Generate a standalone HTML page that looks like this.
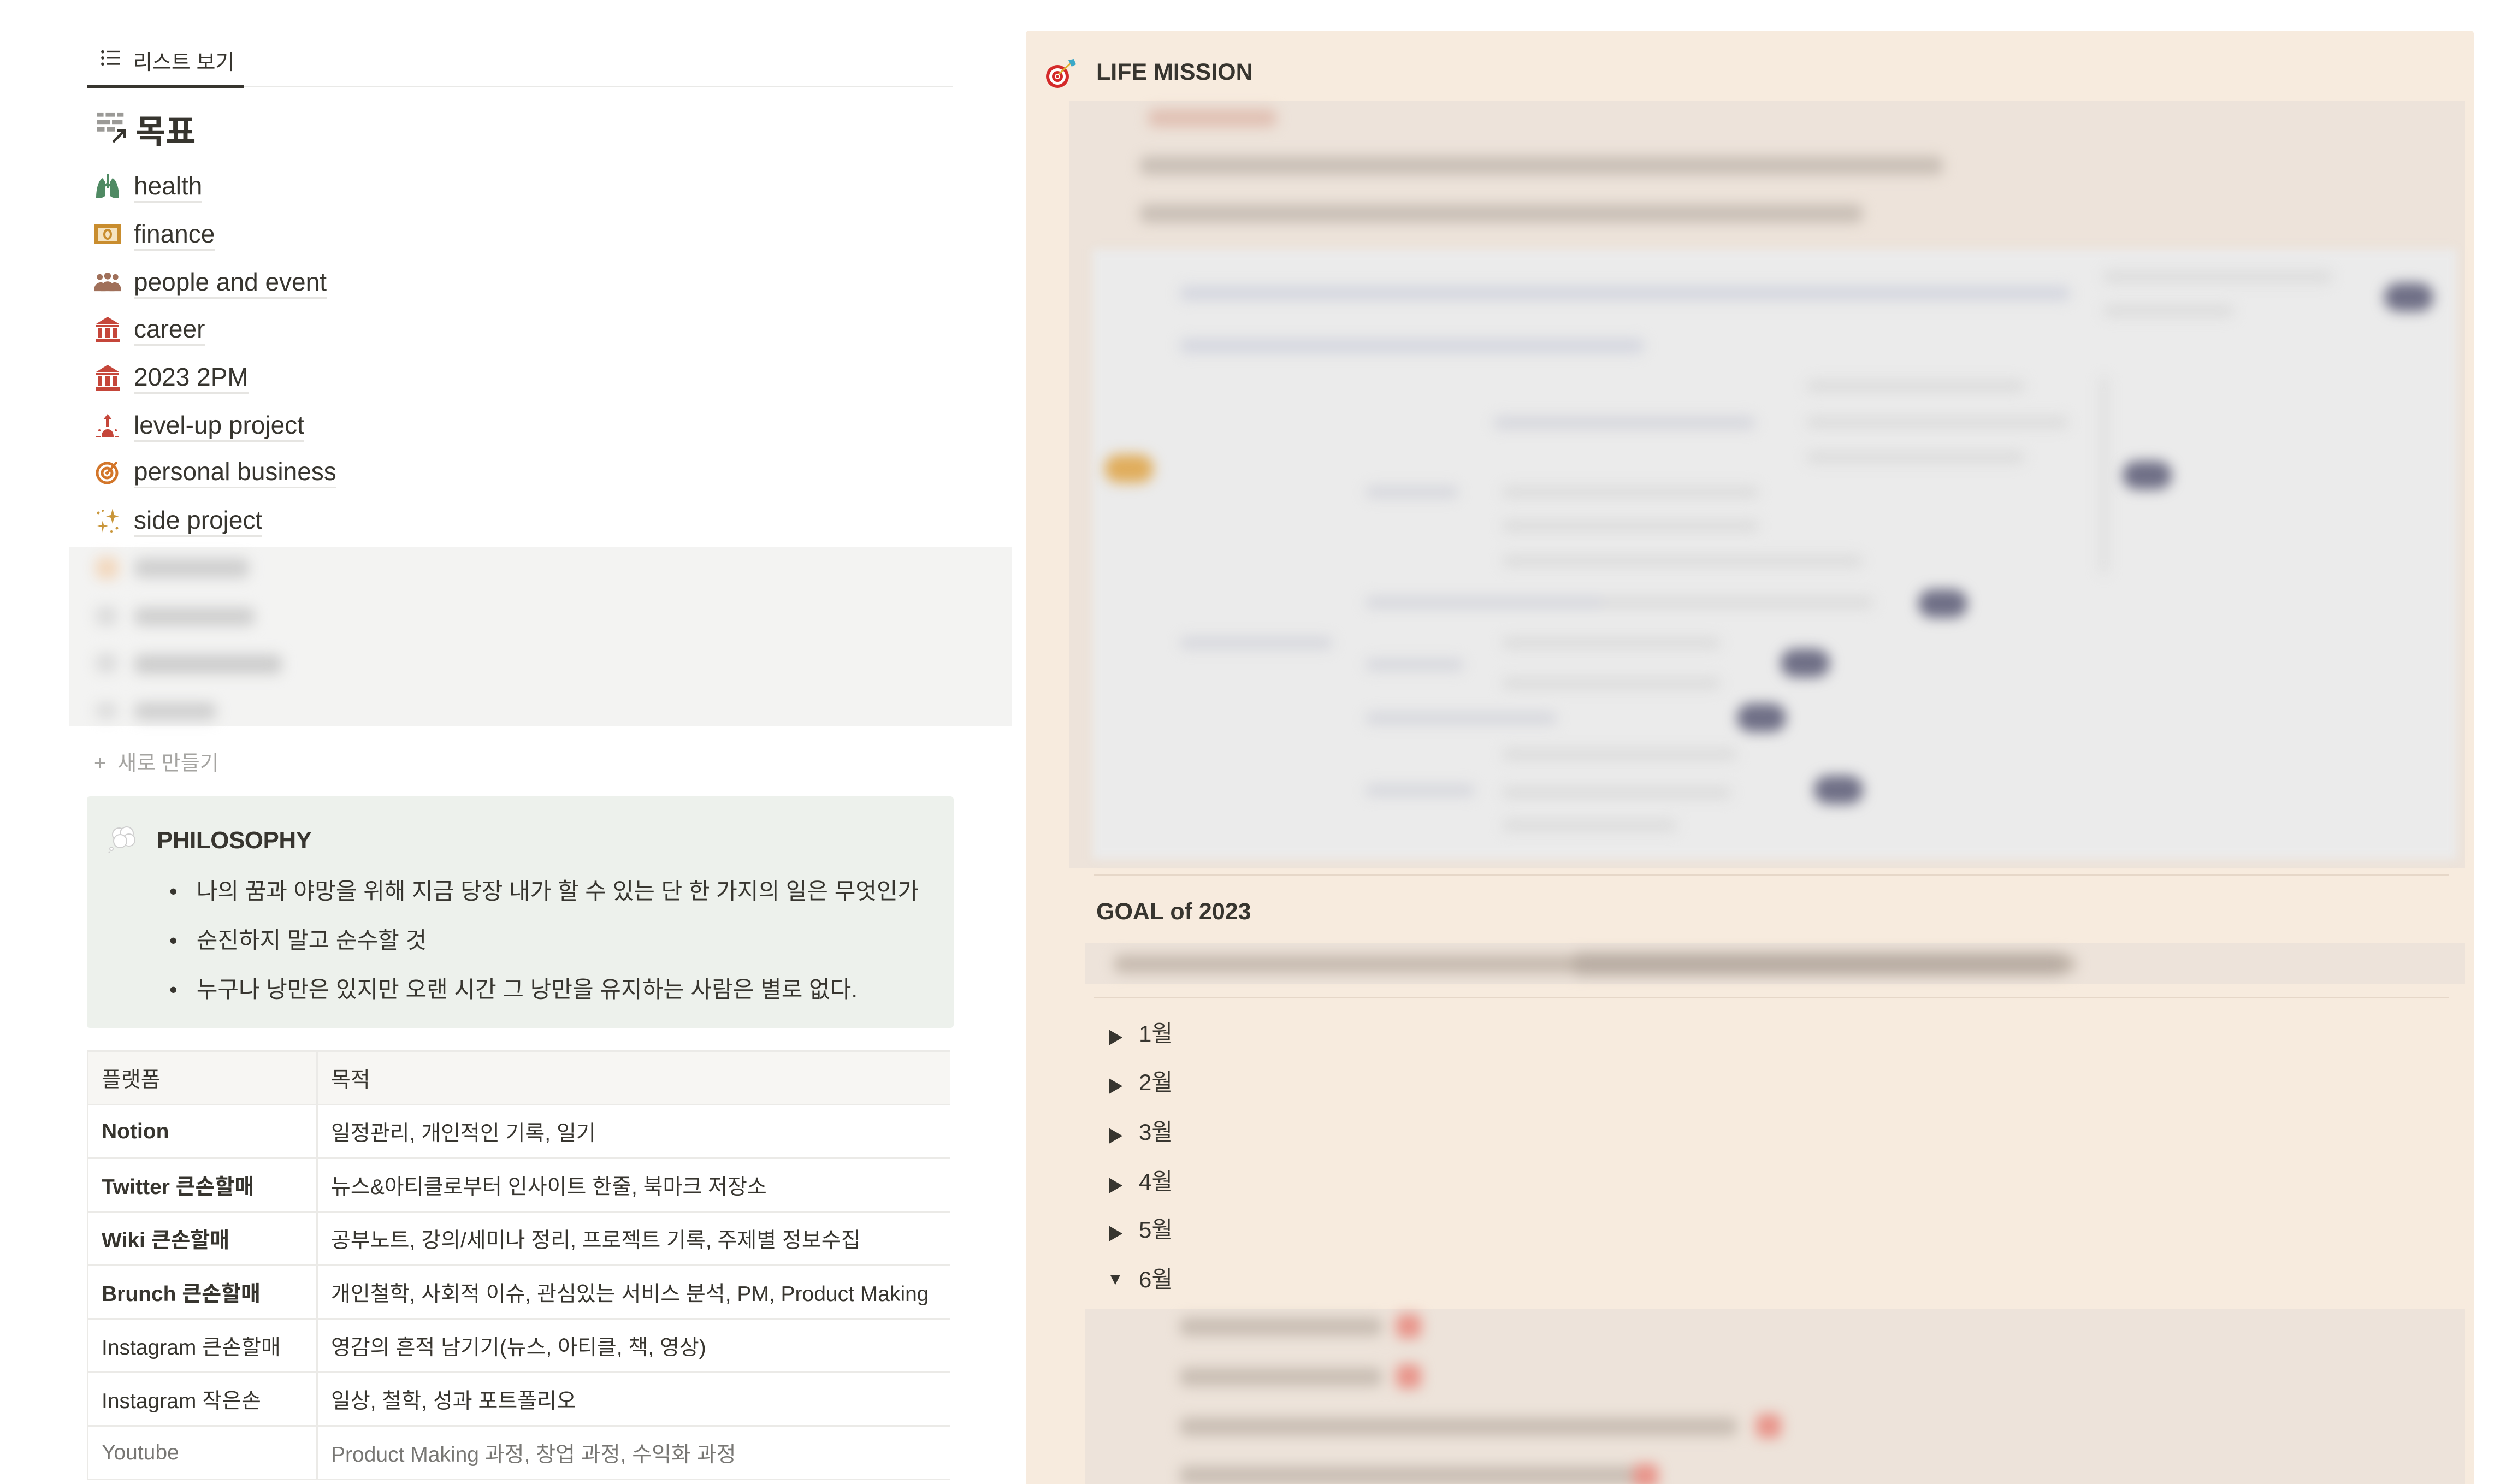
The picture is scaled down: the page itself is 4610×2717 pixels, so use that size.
<!DOCTYPE html>
<html><head><meta charset="utf-8"><style>
*{margin:0;padding:0;box-sizing:border-box}
html,body{width:4610px;height:2717px;overflow:hidden}
body{background:#fff;font-family:"Liberation Sans","Noto Sans CJK KR",sans-serif;color:#37352f;position:relative}
.a{position:absolute}
.item{position:absolute;left:172px;height:60px;display:flex;align-items:center;font-size:46px}
.item .ic{width:50px;height:50px;margin-right:23px;display:flex;align-items:center;justify-content:center}
.item span{border-bottom:3px solid #e6e5e2;line-height:56px}
.blur{filter:blur(12px)}
.bar{position:absolute;border-radius:12px}
.tbl{position:absolute;left:159px;top:1923px;width:1580px;border-collapse:collapse;font-size:39px;table-layout:fixed}
.tbl td{border:3px solid #ebeae7;height:98px;padding:0 0 0 24px;vertical-align:middle;white-space:nowrap;overflow:hidden}
.tbl tr:first-child td{background:#f7f6f3}
.tbl td:first-child{width:420px;border-left:3px solid #ebeae7}
.tbl td:last-child{border-right:none}
.tri{position:absolute;left:2027px;font-size:30px}
.mon{position:absolute;left:2085px;font-size:42px;line-height:50px}
</style></head><body>

<!-- tab -->
<svg class="a" style="left:184px;top:90px" width="38" height="32" viewBox="0 0 40 34"><g fill="#37352f"><circle cx="4" cy="5" r="3"/><circle cx="4" cy="17" r="3"/><circle cx="4" cy="29" r="3"/><rect x="12" y="3" width="26" height="3.5"/><rect x="12" y="15" width="26" height="3.5"/><rect x="12" y="27" width="26" height="3.5"/></g></svg>
<div class="a" style="left:244px;top:83px;font-size:38px">리스트 보기</div>
<div class="a" style="left:160px;top:157px;width:1585px;height:3px;background:#e9e9e7"></div>
<div class="a" style="left:160px;top:155px;width:287px;height:6px;background:#37352f"></div>

<!-- title -->
<svg class="a" style="left:176px;top:204px" width="60" height="58" viewBox="0 0 62 60"><g fill="#9b9a97"><rect x="2" y="2" width="12" height="8"/><rect x="18" y="2" width="18" height="8"/><rect x="40" y="2" width="12" height="8"/><rect x="2" y="16" width="24" height="8"/><rect x="30" y="16" width="20" height="8"/><rect x="2" y="30" width="14" height="8"/><rect x="20" y="30" width="16" height="8"/></g><path d="M32 58 L54 36 M40 36 H54 V50" stroke="#37352f" stroke-width="5" fill="none"/></svg>
<div class="a" style="left:248px;top:193px;font-size:60px;font-weight:bold">목표</div>

<!-- list -->
<div class="item" style="top:311px"><div class="ic"><svg width="46" height="50" viewBox="0 0 46 50"><path d="M23 2V28M23 20L15 26M23 20L31 26" stroke="#4f8a63" stroke-width="4" fill="none"/><path d="M14 10C6 14 2 30 2 46C8 48 16 46 19 42V18Z M32 10C40 14 44 30 44 46C38 48 30 46 27 42V18Z" fill="#4f8a63"/></svg></div><span>health</span></div>
<div class="item" style="top:399px"><div class="ic"><svg width="50" height="40" viewBox="0 0 50 40"><rect x="1" y="2" width="48" height="36" fill="#c98d2e"/><rect x="8" y="8" width="34" height="24" fill="#f5e3c0"/><ellipse cx="25" cy="20" rx="8" ry="10" fill="#c98d2e"/><ellipse cx="25" cy="20" rx="4" ry="6" fill="#f5e3c0"/></svg></div><span>finance</span></div>
<div class="item" style="top:487px"><div class="ic"><svg width="56" height="40" viewBox="0 0 56 40"><g fill="#a0705a"><circle cx="12" cy="9" r="6"/><circle cx="28" cy="7" r="7"/><circle cx="44" cy="9" r="6"/><path d="M0 38C0 24 8 20 14 20 20 20 24 24 24 38Z"/><path d="M32 38C32 24 38 20 42 20 48 20 56 24 56 38Z"/><path d="M14 38C14 22 22 18 28 18 34 18 42 22 42 38Z"/></g></svg></div><span>people and event</span></div>
<div class="item" style="top:573px"><div class="ic"><svg width="46" height="48" viewBox="0 0 46 48"><g fill="#c5463a"><path d="M23 1L44 14H2Z"/><rect x="2" y="16" width="42" height="4"/><rect x="6" y="22" width="7" height="18"/><rect x="19" y="22" width="8" height="18"/><rect x="33" y="22" width="7" height="18"/><rect x="1" y="42" width="44" height="6"/></g></svg></div><span>career</span></div>
<div class="item" style="top:661px"><div class="ic"><svg width="46" height="48" viewBox="0 0 46 48"><g fill="#c5463a"><path d="M23 1L44 14H2Z"/><rect x="2" y="16" width="42" height="4"/><rect x="6" y="22" width="7" height="18"/><rect x="19" y="22" width="8" height="18"/><rect x="33" y="22" width="7" height="18"/><rect x="1" y="42" width="44" height="6"/></g></svg></div><span>2023 2PM</span></div>
<div class="item" style="top:749px"><div class="ic"><svg width="46" height="46" viewBox="0 0 46 46"><g fill="#c5463a"><path d="M23 2L15 12H20V26H26V12H31Z"/><path d="M12 44C12 34 17 30 23 30 29 30 34 34 34 44Z"/><rect x="2" y="42" width="8" height="3"/><rect x="36" y="42" width="8" height="3"/><circle cx="8" cy="32" r="2"/><circle cx="38" cy="32" r="2"/></g></svg></div><span>level-up project</span></div>
<div class="item" style="top:834px"><div class="ic"><svg width="46" height="48" viewBox="0 0 46 48"><g fill="none" stroke="#d3762a" stroke-width="5"><circle cx="22" cy="26" r="18"/><circle cx="22" cy="26" r="9"/></g><circle cx="22" cy="26" r="3" fill="#d3762a"/><path d="M22 26L40 6" stroke="#d3762a" stroke-width="4"/></svg></div><span>personal business</span></div>
<div class="item" style="top:923px"><div class="ic"><svg width="46" height="48" viewBox="0 0 46 48"><g fill="#c9963a"><path d="M32 2L35 14L44 16L35 19L32 30L29 19L20 16L29 14Z"/><path d="M14 24L16 32L24 34L16 36L14 46L12 36L4 34L12 32Z"/><circle cx="6" cy="10" r="2.5"/><circle cx="14" cy="6" r="2"/><circle cx="40" cy="38" r="2.5"/><circle cx="30" cy="44" r="2"/></g></svg></div><span>side project</span></div>

<!-- blurred selection -->
<div class="a" style="left:127px;top:1002px;width:1725px;height:327px;background:#f3f3f2"></div>
<div class="a blur" style="left:0;top:0;width:1900px;height:1400px">
<div class="bar" style="left:175px;top:1020px;width:42px;height:40px;background:#f2d7bd"></div>
<div class="bar" style="left:246px;top:1022px;width:210px;height:36px;background:#cfcfcf"></div>
<div class="bar" style="left:175px;top:1110px;width:40px;height:36px;background:#dcdcdc"></div>
<div class="bar" style="left:246px;top:1112px;width:220px;height:34px;background:#cfcfcf"></div>
<div class="bar" style="left:175px;top:1196px;width:40px;height:36px;background:#dcdcdc"></div>
<div class="bar" style="left:246px;top:1198px;width:270px;height:36px;background:#cdcdcd"></div>
<div class="bar" style="left:175px;top:1286px;width:40px;height:30px;background:#dcdcdc"></div>
<div class="bar" style="left:246px;top:1286px;width:150px;height:32px;background:#cfcfcf"></div>
</div>

<!-- new -->
<div class="a" style="left:172px;top:1366px;font-size:38px;color:#a5a4a1">+&nbsp;&nbsp;새로 만들기</div>

<!-- callout -->
<div class="a" style="left:159px;top:1458px;width:1587px;height:424px;background:#edf1ec;border-radius:6px"></div>
<svg class="a" style="left:196px;top:1510px" width="60" height="52" viewBox="0 0 60 52"><g fill="#fff" stroke="#cfcfcf" stroke-width="2"><circle cx="22" cy="18" r="12"/><circle cx="36" cy="16" r="12"/><circle cx="40" cy="28" r="11"/><circle cx="24" cy="30" r="12"/></g><circle cx="8" cy="44" r="3" fill="#fff" stroke="#cfcfcf" stroke-width="2"/><circle cx="4" cy="50" r="1.5" fill="#cfcfcf"/></svg>
<div class="a" style="left:287px;top:1514px;font-size:44px;font-weight:bold;letter-spacing:-0.5px">PHILOSOPHY</div>
<div class="a" style="left:310px;top:1587px;font-size:42px;line-height:90px">
<div>•&nbsp;&nbsp;&nbsp;나의 꿈과 야망을 위해 지금 당장 내가 할 수 있는 단 한 가지의 일은 무엇인가</div>
<div>•&nbsp;&nbsp;&nbsp;순진하지 말고 순수할 것</div>
<div>•&nbsp;&nbsp;&nbsp;누구나 낭만은 있지만 오랜 시간 그 낭만을 유지하는 사람은 별로 없다.</div>
</div>

<!-- table -->
<table class="tbl">
<tr><td>플랫폼</td><td>목적</td></tr>
<tr><td style="font-weight:bold">Notion</td><td>일정관리, 개인적인 기록, 일기</td></tr>
<tr><td style="font-weight:bold">Twitter 큰손할매</td><td>뉴스&amp;아티클로부터 인사이트 한줄, 북마크 저장소</td></tr>
<tr><td style="font-weight:bold">Wiki 큰손할매</td><td>공부노트, 강의/세미나 정리, 프로젝트 기록, 주제별 정보수집</td></tr>
<tr><td style="font-weight:bold">Brunch 큰손할매</td><td>개인철학, 사회적 이슈, 관심있는 서비스 분석, PM, Product Making</td></tr>
<tr><td>Instagram 큰손할매</td><td>영감의 흔적 남기기(뉴스, 아티클, 책, 영상)</td></tr>
<tr><td>Instagram 작은손</td><td>일상, 철학, 성과 포트폴리오</td></tr>
<tr><td style="color:#787774">Youtube</td><td style="color:#787774">Product Making 과정, 창업 과정, 수익화 과정</td></tr>
</table>

<!-- right panel -->
<div class="a" style="left:1878px;top:56px;width:2651px;height:2661px;background:#f7ebde;border-radius:6px 6px 0 0"></div>
<svg class="a" style="left:1912px;top:106px" width="62" height="58" viewBox="0 0 62 58"><circle cx="24" cy="34" r="21" fill="#d42a2a"/><circle cx="24" cy="34" r="15" fill="#fff"/><circle cx="24" cy="34" r="10" fill="#d42a2a"/><circle cx="24" cy="34" r="5" fill="#fff"/><circle cx="24" cy="34" r="2.5" fill="#d42a2a"/><path d="M26 30L48 10" stroke="#e0b030" stroke-width="3"/><path d="M44 4L54 2L58 12L50 16Z" fill="#3aa8c8"/></svg>
<div class="a" style="left:2007px;top:108px;font-size:43px;font-weight:bold">LIFE MISSION</div>

<div class="a" style="left:1958px;top:185px;width:2555px;height:1405px;background:#ede3da"></div>
<div class="a" style="left:2000px;top:456px;width:2498px;height:1117px;background:#ebebeb;filter:blur(8px)"></div>
<div class="a blur" style="left:0;top:0;width:4610px;height:2717px">
<div class="bar" style="left:2102px;top:200px;width:235px;height:32px;background:#e0bfb2"></div>
<div class="bar" style="left:2087px;top:286px;width:1470px;height:34px;background:#c9bfb6"></div>
<div class="bar" style="left:2087px;top:374px;width:1323px;height:34px;background:#c9bfb6"></div>
<div class="bar" style="left:2160px;top:524px;width:1630px;height:26px;background:#d4d6df"></div>
<div class="bar" style="left:3850px;top:496px;width:420px;height:22px;background:#dcdcdc"></div>
<div class="bar" style="left:3850px;top:558px;width:240px;height:22px;background:#dcdcdc"></div>
<div class="bar" style="left:2160px;top:620px;width:850px;height:26px;background:#d4d6df"></div>
<div class="bar" style="left:3307px;top:696px;width:400px;height:22px;background:#dcdcdc"></div>
<div class="bar" style="left:3307px;top:762px;width:480px;height:22px;background:#dcdcdc"></div>
<div class="bar" style="left:3307px;top:826px;width:400px;height:22px;background:#dcdcdc"></div>
<div class="bar" style="left:2734px;top:762px;width:480px;height:24px;background:#d6d7dd"></div>
<div class="bar" style="left:2500px;top:890px;width:170px;height:22px;background:#d6d7dd"></div>
<div class="bar" style="left:2750px;top:890px;width:470px;height:22px;background:#dcdcdc"></div>
<div class="bar" style="left:2750px;top:952px;width:470px;height:22px;background:#dcdcdc"></div>
<div class="bar" style="left:2750px;top:1016px;width:660px;height:22px;background:#dcdcdc"></div>
<div class="bar" style="left:2500px;top:1092px;width:450px;height:22px;background:#d6d7dd"></div>
<div class="bar" style="left:2930px;top:1092px;width:500px;height:22px;background:#dcdcdc"></div>
<div class="bar" style="left:2160px;top:1166px;width:280px;height:22px;background:#d6d7dd"></div>
<div class="bar" style="left:2500px;top:1206px;width:180px;height:22px;background:#d6d7dd"></div>
<div class="bar" style="left:2750px;top:1166px;width:400px;height:22px;background:#dcdcdc"></div>
<div class="bar" style="left:2750px;top:1240px;width:400px;height:22px;background:#dcdcdc"></div>
<div class="bar" style="left:2500px;top:1304px;width:350px;height:22px;background:#d6d7dd"></div>
<div class="bar" style="left:2750px;top:1370px;width:430px;height:22px;background:#dcdcdc"></div>
<div class="bar" style="left:2500px;top:1436px;width:200px;height:22px;background:#d6d7dd"></div>
<div class="bar" style="left:2750px;top:1440px;width:420px;height:22px;background:#dcdcdc"></div>
<div class="bar" style="left:2750px;top:1500px;width:320px;height:22px;background:#dcdcdc"></div>
<div class="bar" style="left:3845px;top:690px;width:14px;height:360px;background:#dddddd"></div>
<div class="bar" style="left:2022px;top:832px;width:90px;height:52px;background:#e0ad5c;border-radius:26px"></div>
<div class="bar" style="left:4365px;top:518px;width:90px;height:52px;background:#6f6f86;border-radius:26px"></div>
<div class="bar" style="left:3886px;top:844px;width:90px;height:52px;background:#6f6f86;border-radius:26px"></div>
<div class="bar" style="left:3512px;top:1079px;width:90px;height:52px;background:#6f6f86;border-radius:26px"></div>
<div class="bar" style="left:3260px;top:1188px;width:90px;height:52px;background:#6f6f86;border-radius:26px"></div>
<div class="bar" style="left:3180px;top:1288px;width:90px;height:52px;background:#6f6f86;border-radius:26px"></div>
<div class="bar" style="left:3321px;top:1420px;width:90px;height:52px;background:#6f6f86;border-radius:26px"></div>
</div>

<div class="a" style="left:2002px;top:1601px;width:2482px;height:3px;background:#e6d7c8"></div>
<div class="a" style="left:2007px;top:1645px;font-size:43px;font-weight:bold">GOAL of 2023</div>
<div class="a" style="left:1987px;top:1726px;width:2526px;height:76px;background:#ede3da"></div>
<div class="a blur" style="left:0;top:0;width:4610px;height:2717px">
<div class="bar" style="left:2040px;top:1748px;width:1760px;height:34px;background:#c7bbb0"></div>
<div class="bar" style="left:2880px;top:1744px;width:900px;height:42px;background:#b9ada3"></div>
</div>
<div class="a" style="left:2002px;top:1825px;width:2482px;height:3px;background:#e6d7c8"></div>

<div class="tri" style="top:1876px">▶</div><div class="mon" style="top:1868px">1월</div>
<div class="tri" style="top:1965px">▶</div><div class="mon" style="top:1957px">2월</div>
<div class="tri" style="top:2056px">▶</div><div class="mon" style="top:2048px">3월</div>
<div class="tri" style="top:2147px">▶</div><div class="mon" style="top:2139px">4월</div>
<div class="tri" style="top:2235px">▶</div><div class="mon" style="top:2227px">5월</div>
<div class="tri" style="top:2326px">▼</div><div class="mon" style="top:2318px">6월</div>

<div class="a" style="left:1987px;top:2396px;width:2526px;height:321px;background:#ede3da"></div>
<div class="a blur" style="left:0;top:0;width:4610px;height:2717px">
<div class="bar" style="left:2160px;top:2412px;width:370px;height:34px;background:#c9beb4"></div>
<div class="bar" style="left:2556px;top:2406px;width:46px;height:44px;background:#e8948a"></div>
<div class="bar" style="left:2160px;top:2504px;width:370px;height:34px;background:#c9beb4"></div>
<div class="bar" style="left:2556px;top:2498px;width:46px;height:44px;background:#e8948a"></div>
<div class="bar" style="left:2160px;top:2595px;width:1020px;height:34px;background:#c9beb4"></div>
<div class="bar" style="left:3215px;top:2589px;width:46px;height:44px;background:#e8948a"></div>
<div class="bar" style="left:2160px;top:2684px;width:840px;height:34px;background:#c9beb4"></div>
<div class="bar" style="left:2990px;top:2680px;width:46px;height:44px;background:#e8948a"></div>
</div>
</body></html>
